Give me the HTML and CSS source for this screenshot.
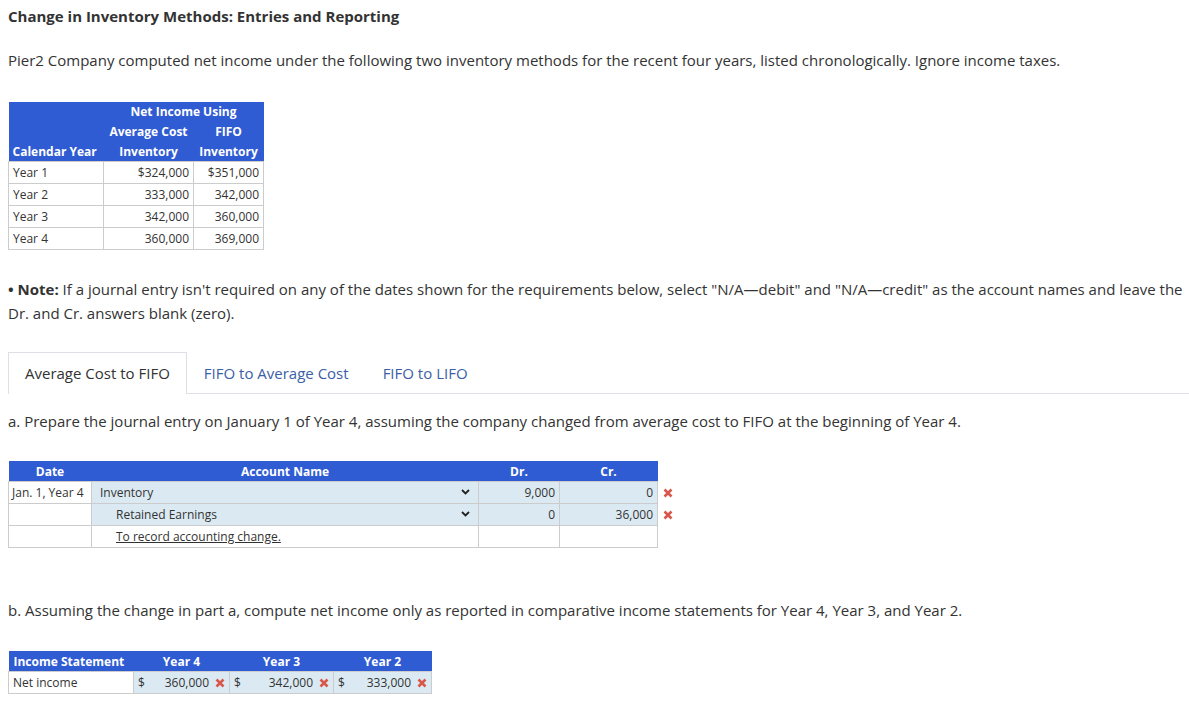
FILE: index.html
```html
<!DOCTYPE html>
<html lang="en">
<head>
  <meta charset="UTF-8" />
  <title>Change in Inventory Methods</title>
  <link rel="stylesheet" href="styles.css">
</head>
<body>
  <div class="page">
    <h1 class="title">Change in Inventory Methods: Entries and Reporting</h1>
    <p class="intro">Pier2 Company computed net income under the following two inventory methods for the recent four years, listed chronologically. Ignore income taxes.</p>

    <table class="data-table">
      <thead>
        <tr>
          <th class="col-year"></th>
          <th colspan="2" class="center">Net Income Using</th>
        </tr>
        <tr>
          <th></th>
          <th class="center col-avg">Average Cost</th>
          <th class="center col-fifo">FIFO</th>
        </tr>
        <tr class="last">
          <th class="left">Calendar Year</th>
          <th class="center">Inventory</th>
          <th class="center">Inventory</th>
        </tr>
      </thead>
      <tbody>
        <tr><td>Year 1</td><td class="num">$324,000</td><td class="num">$351,000</td></tr>
        <tr><td>Year 2</td><td class="num">333,000</td><td class="num">342,000</td></tr>
        <tr><td>Year 3</td><td class="num">342,000</td><td class="num">360,000</td></tr>
        <tr><td>Year 4</td><td class="num">360,000</td><td class="num">369,000</td></tr>
      </tbody>
    </table>

    <p class="note"><strong>&bull; Note:</strong> If a journal entry isn't required on any of the dates shown for the requirements below, select "N/A&mdash;debit" and "N/A&mdash;credit" as the account names and leave the Dr. and Cr. answers blank (zero).</p>

    <div class="tabs">
      <div class="tab active">Average Cost to FIFO</div>
      <div class="tab">FIFO to Average Cost</div>
      <div class="tab">FIFO to LIFO</div>
    </div>

    <p class="part part-a">a. Prepare the journal entry on January 1 of Year 4, assuming the company changed from average cost to FIFO at the beginning of Year 4.</p>

    <table class="journal">
      <thead>
        <tr>
          <th class="col-date">Date</th>
          <th class="col-account">Account Name</th>
          <th class="col-dr">Dr.</th>
          <th class="col-cr">Cr.</th>
          <th class="col-mark"></th>
        </tr>
      </thead>
      <tbody>
        <tr>
          <td class="date">Jan. 1, Year 4</td>
          <td class="input account"><span>Inventory</span><svg class="chevron" width="9" height="6" viewBox="0 0 9 6"><path d="M1 1l3.5 3.5L8 1" fill="none" stroke="#222" stroke-width="1.8"/></svg></td>
          <td class="input num">9,000</td>
          <td class="input num">0</td>
          <td class="mark-cell"><svg class="xmark" width="10" height="10" viewBox="0 0 10 10"><path d="M1.5 1.5l7 7M8.5 1.5l-7 7" stroke="#d9574a" stroke-width="2.6"/></svg></td>
        </tr>
        <tr>
          <td class="date"></td>
          <td class="input account indent"><span>Retained Earnings</span><svg class="chevron" width="9" height="6" viewBox="0 0 9 6"><path d="M1 1l3.5 3.5L8 1" fill="none" stroke="#222" stroke-width="1.8"/></svg></td>
          <td class="input num">0</td>
          <td class="input num">36,000</td>
          <td class="mark-cell"><svg class="xmark" width="10" height="10" viewBox="0 0 10 10"><path d="M1.5 1.5l7 7M8.5 1.5l-7 7" stroke="#d9574a" stroke-width="2.6"/></svg></td>
        </tr>
        <tr>
          <td class="date"></td>
          <td class="indent"><span class="memo">To record accounting change.</span></td>
          <td></td>
          <td></td>
          <td class="mark-cell"></td>
        </tr>
      </tbody>
    </table>

    <p class="part part-b">b. Assuming the change in part a, compute net income only as reported in comparative income statements for Year 4, Year 3, and Year 2.</p>

    <table class="income">
      <thead>
        <tr>
          <th class="col-label">Income Statement</th>
          <th class="col-y4">Year 4</th>
          <th class="col-y3">Year 3</th>
          <th class="col-y2">Year 2</th>
        </tr>
      </thead>
      <tbody>
        <tr>
          <td class="label">Net income</td>
          <td class="input"><div class="money"><span>$</span><span class="amt">360,000</span><svg class="xmark" width="10" height="10" viewBox="0 0 10 10"><path d="M1.5 1.5l7 7M8.5 1.5l-7 7" stroke="#d9574a" stroke-width="2.6"/></svg></div></td>
          <td class="input"><div class="money"><span>$</span><span class="amt">342,000</span><svg class="xmark" width="10" height="10" viewBox="0 0 10 10"><path d="M1.5 1.5l7 7M8.5 1.5l-7 7" stroke="#d9574a" stroke-width="2.6"/></svg></div></td>
          <td class="input"><div class="money"><span>$</span><span class="amt">333,000</span><svg class="xmark" width="10" height="10" viewBox="0 0 10 10"><path d="M1.5 1.5l7 7M8.5 1.5l-7 7" stroke="#d9574a" stroke-width="2.6"/></svg></div></td>
        </tr>
      </tbody>
    </table>
  </div>
</body>
</html>
```

FILE: styles.css
```css
body {
  margin: 0;
  font-family: "Open Sans", "Liberation Sans", sans-serif;
  font-size: 15px;
  color: #333;
  background: #fff;
}

.page {
  padding: 6px 0 0 8px;
}

.title {
  margin: 0;
  font-size: 15px;
  line-height: 20px;
  font-weight: bold;
  color: #333;
}

.intro {
  margin: 22px 0 0;
  line-height: 24px;
}

/* first data table */
.data-table {
  margin-top: 30px;
  border-collapse: collapse;
  font-size: 12px;
}

.data-table th {
  background-color: #2f5bd3;
  color: #fff;
  font-weight: bold;
  height: 20px;
  padding: 0 4px;
  line-height: 19px;
  vertical-align: top;
}

.data-table tr.last th {
  height: 19px;
}

.data-table th.left {
  text-align: left;
}

.data-table th.center {
  text-align: center;
}

.data-table .col-year {
  width: 87px;
}

.data-table .col-avg {
  width: 82px;
}

.data-table .col-fifo {
  width: 62px;
}

.data-table td {
  border: 1px solid #ccc;
  height: 21px;
  padding: 0 4px;
  line-height: 20px;
}

.data-table td.num {
  text-align: right;
}

.note {
  margin: 27px 0 0;
  line-height: 24px;
}

/* tabs */
.tabs {
  margin-top: 27px;
  display: flex;
  border-bottom: 1px solid #dde0e6;
}

.tab {
  padding: 0 16px;
  height: 40px;
  line-height: 40px;
  color: #3c5ea7;
  margin-bottom: -1px;
  border: 1px solid transparent;
  border-bottom: none;
}

.tab.active {
  color: #333;
  border-color: #dde0e6;
  background: #fff;
  height: 41px;
}

.part {
  margin: 0;
  line-height: 24px;
}

.part-a {
  margin-top: 15px;
}

.part-b {
  margin-top: 50px;
}

/* journal table */
.journal {
  margin-top: 28px;
  border-collapse: collapse;
  font-size: 12px;
}

.journal th {
  background-color: #2f5bd3;
  color: #fff;
  font-weight: bold;
  height: 20px;
  padding: 0;
  text-align: center;
}

.journal th.col-mark {
  background: none;
}

.journal .col-date {
  width: 83px;
}

.journal .col-account {
  width: 387px;
}

.journal .col-dr {
  width: 81px;
}

.journal .col-cr {
  width: 98px;
}

.journal .col-mark {
  width: 16px;
}

.journal td {
  border: 1px solid #ccc;
  height: 21px;
  padding: 0 4px;
}

.journal td.input {
  background-color: #dbeaf2;
}

.journal td.date {
  white-space: nowrap;
  padding: 0 3px;
}

.journal td.account {
  padding-left: 8px;
  padding-right: 8px;
}

.journal td.account span {
  float: left;
}

.journal td.indent {
  padding-left: 24px;
}

.chevron {
  float: right;
  margin-top: 5px;
}

.journal td.num {
  text-align: right;
}

.journal td.mark-cell {
  border: none;
  padding: 0 0 0 5px;
}

.xmark {
  display: block;
}

.memo {
  text-decoration: underline;
}

/* income statement table */
.income {
  margin-top: 29px;
  border-collapse: collapse;
  font-size: 12px;
}

.income th {
  background-color: #2f5bd3;
  color: #fff;
  font-weight: bold;
  height: 20px;
  padding: 0;
  text-align: center;
}

.income th.col-label {
  text-align: left;
  padding-left: 5px;
  width: 120px;
}

.income .col-y4 {
  width: 96px;
}

.income .col-y3 {
  width: 104px;
}

.income .col-y2 {
  width: 98px;
}

.income td {
  border: 1px solid #ccc;
  height: 21px;
  padding: 0 4px;
}

.income td.input {
  background-color: #dbeaf2;
}

.money {
  display: flex;
  align-items: center;
  gap: 6px;
}

.money .amt {
  flex: 1;
  text-align: right;
}
```
